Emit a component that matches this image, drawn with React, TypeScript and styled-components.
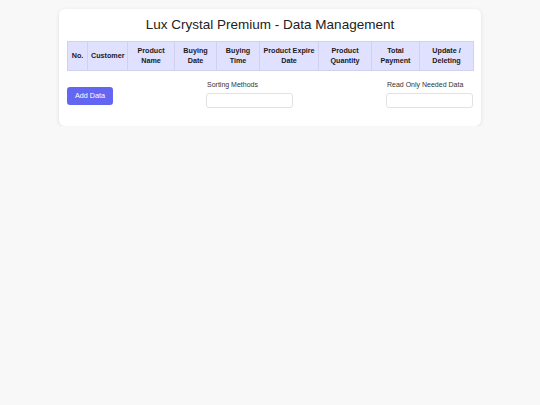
import styled, {createGlobalStyle} from 'styled-components';

const GlobalStyle = createGlobalStyle`
  html, body {
    margin: 0;
    padding: 0;
    background: #f8f8f8;
    font-family: "Liberation Sans", Arial, sans-serif;
  }
`;

const columns = [
  'No.',
  'Customer',
  'Product Name',
  'Buying Date',
  'Buying Time',
  'Product Expire Date',
  'Product Quantity',
  'Total Payment',
  'Update / Deleting',
];

const widths = [20, 40, 47, 42, 43, 59, 53, 48, 54];

const App = () => {
  return (
    <>
      <GlobalStyle />
      <Page>
        <Card>
          <Title>Lux Crystal Premium - Data Management</Title>
          <Table>
            <colgroup>
              {widths.map((w, i) => (
                <col key={i} style={{width: w}} />
              ))}
            </colgroup>
            <thead>
              <tr>
                {columns.map((c) => (
                  <Th key={c}>{c}</Th>
                ))}
              </tr>
            </thead>
          </Table>
          <Controls>
            <AddButton>Add Data</AddButton>
            <Field>
              <Label>Sorting Methods</Label>
              <Input />
            </Field>
            <Field>
              <Label>Read Only Needed Data</Label>
              <Input />
            </Field>
          </Controls>
        </Card>
      </Page>
    </>
  );
};

const Page = styled.div`
  padding-top: 9px;
  display: flex;
  justify-content: center;
`;

const Card = styled.div`
  width: 422px;
  box-sizing: border-box;
  background: #ffffff;
  border-radius: 6px;
  box-shadow: 0 1px 4px rgba(0, 0, 0, 0.1);
  padding: 7px 8px 18px;
`;

const Title = styled.h1`
  margin: 0 0 7px;
  font-size: 13.5px;
  font-weight: 400;
  text-align: center;
  color: #222;
  line-height: 18px;
`;

const Table = styled.table`
  width: 100%;
  border-collapse: collapse;
  table-layout: fixed;
`;

const Th = styled.th`
  background: #e0e0ff;
  border: 1px solid #d0d0f0;
  height: 29px;
  box-sizing: border-box;
  padding: 0 3px;
  font-size: 7.2px;
  font-weight: 700;
  line-height: 10px;
  color: #1a1a1a;
  text-align: center;
`;

const Controls = styled.div`
  display: flex;
  justify-content: space-between;
  align-items: center;
  margin-top: 9px;
`;

const AddButton = styled.button`
  width: 46px;
  height: 18px;
  margin-top: 3px;
  border: none;
  border-radius: 3px;
  background: #6366f1;
  color: #fff;
  font-family: "Liberation Sans", Arial, sans-serif;
  font-size: 7.2px;
  padding: 0;
`;

const Field = styled.div`
  display: flex;
  flex-direction: column;
`;

const Label = styled.span`
  font-size: 7px;
  color: #333;
  line-height: 9px;
  margin-bottom: 4px;
  padding-left: 1px;
`;

const Input = styled.input`
  width: 87px;
  height: 15px;
  box-sizing: border-box;
  border: 1px solid #e2e2e2;
  border-radius: 3px;
  background: #fff;
`;

export default App;
